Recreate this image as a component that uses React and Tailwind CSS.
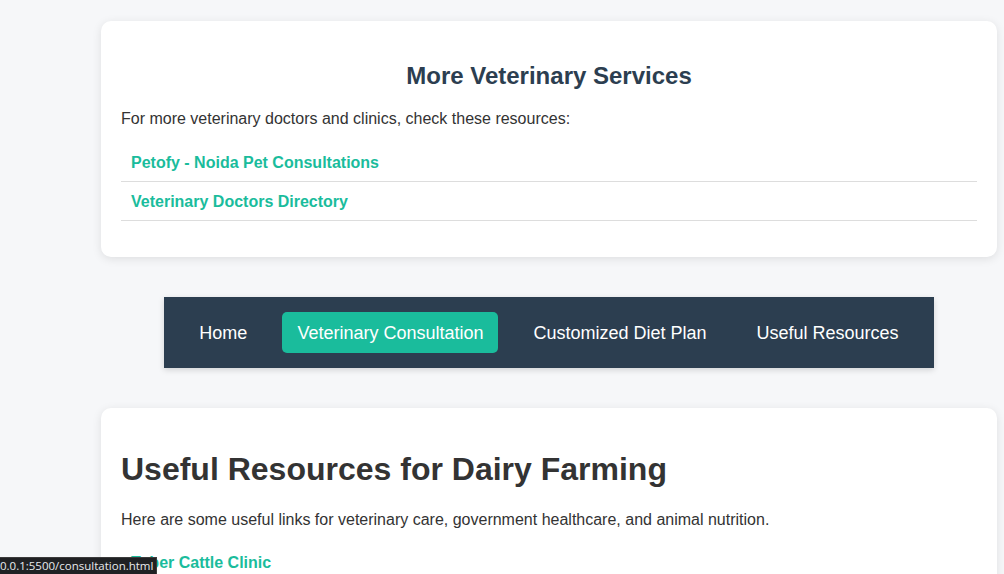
export default function App() {
  const moreLinks = ['Petofy - Noida Pet Consultations', 'Veterinary Doctors Directory'];
  const navItems = ['Home', 'Veterinary Consultation', 'Customized Diet Plan', 'Useful Resources'];

  return (
    <div className="relative h-[574px] overflow-hidden bg-[#f6f7f9] text-[#333] font-['Liberation_Sans',Arial,sans-serif]">
      <div className="ml-[101px] w-[896px] pt-[21px]">
        {/* more vet services */}
        <section className="rounded-[10px] bg-white px-5 pt-5 pb-5 shadow-[0_2px_10px_rgba(0,0,0,0.1)]">
          <h2 className="mt-[21px] text-center text-[24px] leading-[28px] font-bold text-[#2c3e50]">
            More Veterinary Services
          </h2>
          <p className="mt-5 text-[16px] leading-[18px]">
            For more veterinary doctors and clinics, check these resources:
          </p>
          <ul className="mt-[15px] mb-4">
            {moreLinks.map((l) => (
              <li key={l} className="border-b border-[#ddd] px-[10px] pt-[11px] pb-[9px] leading-[18px]">
                <a className="text-[16px] font-bold text-[#1abc9c]">{l}</a>
              </li>
            ))}
          </ul>
        </section>

        {/* nav */}
        <div className="mt-10 flex justify-center">
          <nav className="flex gap-5 bg-[#2c3e50] px-5 py-[15px] shadow-[0_2px_6px_rgba(0,0,0,0.15)]">
            {navItems.map((n, i) => (
              <a
                key={n}
                className={
                  'rounded-[5px] px-[15px] pt-[11px] pb-[9px] text-[18px] leading-[21px] text-white ' +
                  (i === 1 ? 'bg-[#1abc9c]' : '')
                }
              >
                {n}
              </a>
            ))}
          </nav>
        </div>

        {/* useful resources */}
        <section className="mt-10 rounded-[10px] bg-white px-5 pt-5 pb-5 shadow-[0_2px_10px_rgba(0,0,0,0.1)]">
          <h2 className="mt-[23px] text-[32px] leading-[37px] font-bold text-[#333]">
            Useful Resources for Dairy Farming
          </h2>
          <p className="mt-[23px] text-[16px] leading-[18px]">
            Here are some useful links for veterinary care, government healthcare, and animal nutrition.
          </p>
          <ul className="mt-[15px]">
            <li className="border-b border-[#ddd] px-[10px] py-[10px] leading-[18px]">
              <a className="text-[16px] font-bold text-[#1abc9c]">Tuber Cattle Clinic</a>
            </li>
          </ul>
        </section>
      </div>

      {/* browser status bubble */}
      <div className="absolute bottom-0 left-0 h-[17px] border-t border-r border-[#3c3c3c] bg-[#202124] pr-[3px] text-[11.5px] leading-[16px] text-[#e8eaed] font-['Open_Sans',sans-serif]">
        0.0.1:5500/consultation.html
      </div>
    </div>
  );
}
